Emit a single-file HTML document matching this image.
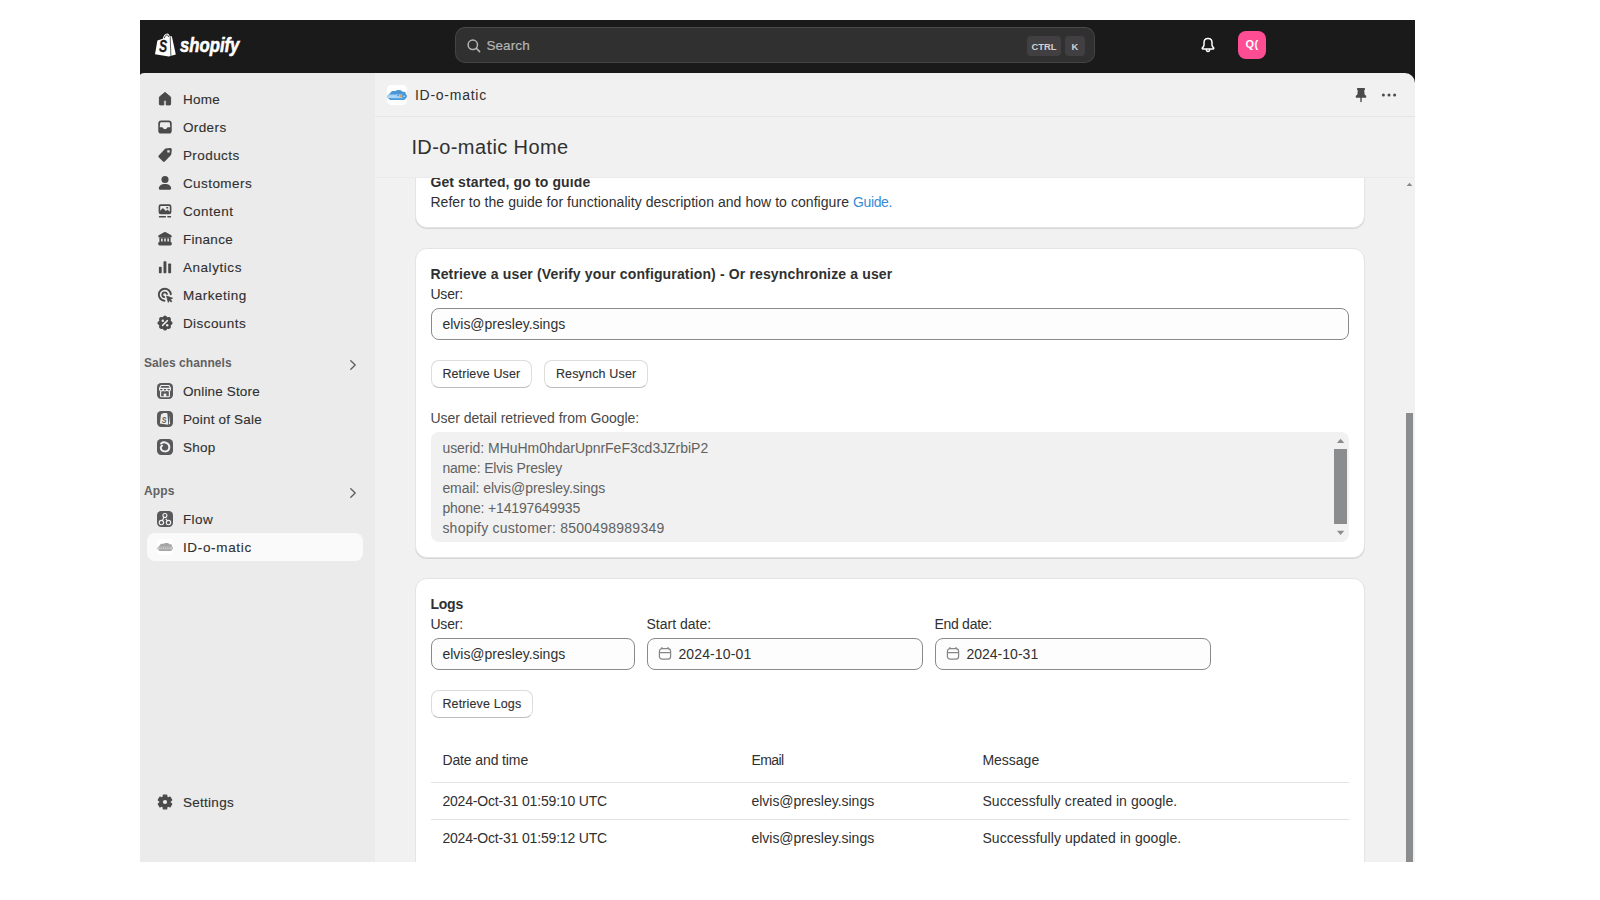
<!DOCTYPE html>
<html lang="en">
<head>
<meta charset="utf-8">
<title>ID-o-matic · Shopify</title>
<style>
*{box-sizing:border-box;margin:0;padding:0}
html,body{width:1600px;height:900px;background:#fff;overflow:hidden}
body{font-family:"Liberation Sans",sans-serif;color:#303030;position:relative}
.abs{position:absolute}
.m,.n,.s{position:absolute;white-space:pre;line-height:20px;height:20px;color:#303030}
.n{-webkit-text-stroke:.12px #303030}
.s{color:#616161;font-weight:700}
.kbd{position:absolute;height:20px;border-radius:4px;background:#413f41;color:#d2d2d2;font-weight:700;font-size:9.4px;line-height:22px;text-align:center;letter-spacing:0}
.card{position:absolute;background:#fff;border-radius:12px;border:1px solid #e4e4e4;box-shadow:0 1px 0 0 #d6d6d6}
.inp{position:absolute;height:32px;border:1px solid #8a8a8a;border-radius:8px;background:#fdfdfd}
.btn{position:absolute;height:28px;border-radius:8px;background:#fff;border:1px solid #dcdcdc;border-bottom-color:#bdbdbd}
.hr{position:absolute;height:1px;background:#e3e3e3}
</style>
</head>
<body>
<div class="abs" style="left:140px;top:20px;width:1275px;height:842px;background:#1a1a1a"></div>
<div class="abs" style="left:140px;top:73px;width:235px;height:789px;background:#ebebeb;border-top-left-radius:4.5px 2.5px"></div>
<div class="abs" style="left:375px;top:73px;width:1040px;height:789px;background:#f1f1f1;border-top-right-radius:10px"></div>
<svg class="abs" style="left:154px;top:32px" width="24" height="26" viewBox="0 0 24 26">
<path d="M3.4 8.4 L8.8 6.8 C9.4 3.9 11 1.4 13.2 1.4 C14.5 1.4 15.3 2.5 15.7 4.4 L17.3 4 L18 4.9 L21.8 22.6 L14.8 24.6 L1 22.2 Z" fill="#fff"/>
<path d="M16.2 4.6 L16.9 24" stroke="#1a1a1a" stroke-width=".7" fill="none"/>
<path d="M10.4 6.2 C10.8 4.4 11.8 2.9 13 2.8 C13.8 2.8 14.3 3.8 14.5 5" stroke="#1a1a1a" stroke-width=".8" fill="none"/>
</svg>
<div class="abs" style="left:154.9px;top:35.6px;width:16px;height:20px;font:italic 700 16.5px/20px 'Liberation Sans',sans-serif;color:#1a1a1a;text-align:center;-webkit-text-stroke:.3px #1a1a1a;transform:scaleX(.74)">S</div>
<div class="abs" style="left:179.6px;top:31.6px;height:26px;font:italic 700 20.5px/26px 'Liberation Sans',sans-serif;color:#fff;letter-spacing:0;white-space:pre;-webkit-text-stroke:.6px #fff;transform:scaleX(.815);transform-origin:0 0">shopify</div>
<div class="abs" style="left:455px;top:27px;width:640px;height:36px;border-radius:10px;background:#303030;border:1px solid #444;border-top-color:#4c4c4c"></div>
<svg class="abs" style="left:466px;top:37.5px" width="16" height="16" viewBox="0 0 16 16" fill="none" stroke="#b5b5b5" stroke-width="1.5" stroke-linecap="round"><circle cx="6.8" cy="6.8" r="4.7"/><path d="M10.4 10.4 L13.6 13.6"/></svg>
<div class="m" style="left:486.40px;top:36.10px;font-size:13.5px;letter-spacing:0.105px;color:#b5b5b5;-webkit-text-stroke:.2px #b5b5b5;">Search</div>
<div class="kbd" style="left:1027px;top:36px;width:34px">CTRL</div><div class="kbd" style="left:1065px;top:36px;width:20px">K</div>
<svg class="abs" style="left:1199px;top:36px" width="18" height="18" viewBox="0 0 18 18" fill="none" stroke="#fff" stroke-width="1.5" stroke-linejoin="round" stroke-linecap="round">
<path d="M9 2.6 C6.5 2.6 5 4.4 5 6.7 V9 C5 10 4.4 10.9 3.4 11.9 C3 12.3 3.2 13 3.9 13 H14.1 C14.8 13 15 12.3 14.6 11.9 C13.6 10.9 13 10 13 9 V6.7 C13 4.4 11.5 2.6 9 2.6 Z"/>
<path d="M7.4 13.4 C7.4 14.6 8.1 15.4 9 15.4 C9.9 15.4 10.6 14.6 10.6 13.4"/>
</svg>
<div class="abs" style="left:1238px;top:31px;width:28px;height:28px;border-radius:8px;background:#ff4d94;color:#fff;font-weight:700;font-size:11px;line-height:27px;text-align:center;letter-spacing:.3px">Q(</div>
<div class="abs" style="left:147px;top:533px;width:216px;height:28px;border-radius:8px;background:#fafafa"></div>
<div class="n" style="left:182.90px;top:90.00px;font-size:13.5px;letter-spacing:0.263px;">Home</div>
<svg class="abs" style="left:155.00px;top:88.60px" width="20" height="20" viewBox="-10 -10 20 20" ><path fill="#4a4a4a" stroke="#4a4a4a" stroke-width="1" stroke-linejoin="round" d="M0 -6.6 L5.6 -2 V5.2 a.7 .7 0 0 1 -.7 .7 H1.2 V2.2 a1.2 1.2 0 0 0 -2.4 0 V5.9 H-4.9 a.7 .7 0 0 1 -.7 -.7 V-2 Z"/></svg>
<div class="n" style="left:182.90px;top:118.00px;font-size:13.5px;letter-spacing:0.408px;">Orders</div>
<svg class="abs" style="left:155.00px;top:116.60px" width="20" height="20" viewBox="-10 -10 20 20" ><path transform="scale(1.05)" fill="#4a4a4a" fill-rule="evenodd" d="M-3.6 -6.3 H3.6 A2.8 2.8 0 0 1 6.4 -3.5 V3.5 A2.8 2.8 0 0 1 3.6 6.3 H-3.6 A2.8 2.8 0 0 1 -6.4 3.5 V-3.5 A2.8 2.8 0 0 1 -3.6 -6.3 Z M-3.7 -4.6 a.9 .9 0 0 0 -.9 .8 L-5 .3 H-2.6 a.7 .7 0 0 1 .6 .4 C-1.6 1.6 -.9 2.1 0 2.1 C.9 2.1 1.6 1.6 2 .7 a.7 .7 0 0 1 .6 -.4 H5 L4.6 -3.8 a.9 .9 0 0 0 -.9 -.8 Z"/></svg>
<div class="n" style="left:182.90px;top:146.00px;font-size:13.5px;letter-spacing:0.432px;">Products</div>
<svg class="abs" style="left:155.00px;top:144.60px" width="20" height="20" viewBox="-10 -10 20 20" ><path fill="#4a4a4a" fill-rule="evenodd" d="M.6 -6.4 L5.2 -6.9 Q6.9 -7 6.8 -5.3 L6.3 -.7 Q6.2 -.1 5.8 .3 L-.2 6.5 Q-1.1 7.3 -2 6.5 L-6.3 2.2 Q-7.1 1.3 -6.3 .4 L-.1 -5.9 Q.2 -6.3 .6 -6.4 Z M2.3 -4.7 h2.3 v2.3 h-2.3 z"/></svg>
<div class="n" style="left:182.90px;top:174.00px;font-size:13.5px;letter-spacing:0.442px;">Customers</div>
<svg class="abs" style="left:155.00px;top:172.60px" width="20" height="20" viewBox="-10 -10 20 20" ><circle cx="0" cy="-3.5" r="3.55" fill="#4a4a4a"/><path fill="#4a4a4a" d="M-6.1 5.3 C-6.1 2.3 -3.2 .9 0 .9 C3.2 .9 6.1 2.3 6.1 5.3 Q6.1 6.8 4.8 6.8 H-4.8 Q-6.1 6.8 -6.1 5.3 Z"/></svg>
<div class="n" style="left:182.90px;top:202.00px;font-size:13.5px;letter-spacing:0.469px;">Content</div>
<svg class="abs" style="left:155.00px;top:200.60px" width="20" height="20" viewBox="-10 -10 20 20" ><path fill="#4a4a4a" fill-rule="evenodd" d="M-4.2 -6.7 H4.2 A2.2 2.2 0 0 1 6.4 -4.5 V1 A2.2 2.2 0 0 1 4.2 3.2 H-4.2 A2.2 2.2 0 0 1 -6.4 1 V-4.5 A2.2 2.2 0 0 1 -4.2 -6.7 Z M-4 -5 a.8 .8 0 0 0 -.8 .8 V-.3 L-2.6 -2.6 a.7 .7 0 0 1 1 0 L.9 -.1 L2 -1.1 a.7 .7 0 0 1 1 0 L4.8 .7 V-4.2 a.8 .8 0 0 0 -.8 -.8 Z M1.3 -4.1 h1.9 v1.7 h-1.9 z"/><path d="M-5.5 5.8 H.4 M2.9 5.8 H5.5" stroke="#4a4a4a" stroke-width="1.4" stroke-linecap="round"/></svg>
<div class="n" style="left:182.90px;top:230.00px;font-size:13.5px;letter-spacing:0.295px;">Finance</div>
<svg class="abs" style="left:155.00px;top:228.60px" width="20" height="20" viewBox="-10 -10 20 20" ><path fill="#4a4a4a" d="M-.9 -6.7 Q0 -7.2 .9 -6.7 L5.9 -4 Q6.7 -3.5 6.7 -2.6 V-1.7 H-6.7 V-2.6 Q-6.7 -3.5 -5.9 -4 Z"/><path fill="#4a4a4a" d="M-5.6 -1.8 H5.6 V3.2 H-5.6 Z"/><path fill="#ebebeb" d="M-3.9 -.5 h1.5 v3 h-1.5 z M-.75 -.5 h1.5 v3 h-1.5 z M2.4 -.5 h1.5 v3 h-1.5 z"/><rect x="-6.8" y="2.9" width="13.6" height="3.6" rx="1.4" fill="#4a4a4a"/></svg>
<div class="n" style="left:182.90px;top:258.00px;font-size:13.5px;letter-spacing:0.560px;">Analytics</div>
<svg class="abs" style="left:155.00px;top:256.60px" width="20" height="20" viewBox="-10 -10 20 20" ><rect x="-6.1" y="-.3" width="2.8" height="6.6" rx=".7" fill="#4a4a4a"/><rect x="-1.5" y="-5.7" width="2.9" height="12" rx=".7" fill="#4a4a4a"/><rect x="3.2" y="-3.4" width="2.9" height="9.7" rx=".7" fill="#4a4a4a"/></svg>
<div class="n" style="left:182.90px;top:286.00px;font-size:13.5px;letter-spacing:0.503px;">Marketing</div>
<svg class="abs" style="left:155.00px;top:284.60px" width="20" height="20" viewBox="-10 -10 20 20" ><path fill="none" stroke="#4a4a4a" stroke-width="1.9" stroke-linecap="round" d="M5.8 -.8 A6 6 0 1 0 -.6 5.7"/><path fill="none" stroke="#4a4a4a" stroke-width="1.8" stroke-linecap="round" d="M2 -.9 A2.4 2.4 0 1 0 -.7 2.1"/><path fill="#4a4a4a" stroke="#4a4a4a" stroke-width=".8" stroke-linejoin="round" d="M1.6 1.1 L7.6 3.2 L5.2 4.4 L6.9 6.3 L6 7.1 L4.3 5.3 L3.3 7.4 Z"/></svg>
<div class="n" style="left:182.90px;top:314.00px;font-size:13.5px;letter-spacing:0.441px;">Discounts</div>
<svg class="abs" style="left:155.00px;top:312.60px" width="20" height="20" viewBox="-10 -10 20 20" ><path fill="#4a4a4a" d="M-2.37 -5.73 Q0.00 -9.50 2.37 -5.73 Q6.72 -6.72 5.73 -2.37 Q9.50 0.00 5.73 2.37 Q6.72 6.72 2.37 5.73 Q0.00 9.50 -2.37 5.73 Q-6.72 6.72 -5.73 2.37 Q-9.50 0.00 -5.73 -2.37 Q-6.72 -6.72 -2.37 -5.73 Z"/><path d="M-2.4 2.4 L2.4 -2.4" stroke="#ebebeb" stroke-width="1.5" stroke-linecap="round"/><circle cx="-2.2" cy="-2.2" r="1.2" fill="#ebebeb"/><circle cx="2.2" cy="2.2" r="1.2" fill="#ebebeb"/></svg>
<div class="n" style="left:182.90px;top:382.00px;font-size:13.5px;letter-spacing:0.160px;">Online Store</div>
<svg class="abs" style="left:155.00px;top:380.60px" width="20" height="20" viewBox="-10 -10 20 20" ><rect x="-8" y="-8" width="16" height="16" rx="4.2" fill="#59595b"/><g fill="none" stroke="#f0f0f0" stroke-width="1.15" stroke-linejoin="round" stroke-linecap="round"><path d="M-4 -5.5 H4 L5.5 -2.7 H-5.5 Z"/><path d="M-5.5 -2.7 v.9 a1.83 1.83 0 0 0 3.66 0 a1.83 1.83 0 0 0 3.66 0 a1.83 1.83 0 0 0 3.66 0 v-.9"/><path d="M-4.4 .6 V5.1 Q-4.4 5.7 -3.8 5.7 H3.8 Q4.4 5.7 4.4 5.1 V.6"/></g><path fill="#f0f0f0" d="M-1.3 2.6 h2.6 v3.3 h-2.6 z"/></svg>
<div class="n" style="left:182.90px;top:410.00px;font-size:13.5px;letter-spacing:0.187px;">Point of Sale</div>
<svg class="abs" style="left:155.00px;top:408.60px" width="20" height="20" viewBox="-10 -10 20 20" ><rect x="-8" y="-8" width="16" height="16" rx="4.2" fill="#59595b"/><path fill="#eeeeee" d="M-4 -4.6 C-3 -5.4 -1.6 -6 -.6 -6 C.6 -6.1 1.8 -5.9 2.4 -5.6 L3.3 5.7 L-5.1 4.5 Z"/><path fill="#eeeeee" d="M4.1 -4 L5.1 5 L4 5.3 Z"/><text transform="translate(-.8 3.5) scale(.8 1)" text-anchor="middle" font-family="Liberation Sans, sans-serif" font-style="italic" font-weight="700" font-size="8.8" fill="#59595b" opacity=".99">S</text></svg>
<div class="n" style="left:182.90px;top:438.00px;font-size:13.5px;letter-spacing:0.257px;">Shop</div>
<svg class="abs" style="left:155.00px;top:436.60px" width="20" height="20" viewBox="-10 -10 20 20" ><rect x="-8" y="-8" width="16" height="16" rx="4.2" fill="#59595b"/><path fill="none" stroke="#f0f0f0" stroke-width="1.95" stroke-linecap="round" d="M-3.9 -3.5 C-2.6 -4.7 -.4 -4.9 1.4 -4.2 C3.4 -3.3 4.5 -1.4 4.3 .6 C4 3 2 4.5 -.2 4.4 C-2.6 4.3 -4.3 2.6 -4.2 .7 C-4.1 -.3 -3.6 -1 -2.8 -1.3"/></svg>
<div class="n" style="left:182.90px;top:510.00px;font-size:13.5px;letter-spacing:0.432px;">Flow</div>
<svg class="abs" style="left:155.00px;top:508.60px" width="20" height="20" viewBox="-10 -10 20 20" ><rect x="-8" y="-8" width="16" height="16" rx="4.2" fill="#59595b"/><g fill="none" stroke="#f4f4f4" stroke-width="1.1" stroke-linecap="round"><circle cx="-.1" cy="-3.5" r="2"/><circle cx="-3.6" cy="3.6" r="2.2"/><circle cx="3.5" cy="3.6" r="2.2"/><path d="M-1 -1.7 L-2.6 1.6 M1 .2 L2.3 1.7"/></g></svg>
<div class="n" style="left:182.90px;top:538.00px;font-size:13.5px;letter-spacing:0.672px;">ID-o-matic</div>
<div class="n" style="left:182.90px;top:793.00px;font-size:13.5px;letter-spacing:0.289px;">Settings</div>
<svg class="abs" style="left:155.00px;top:791.60px" width="20" height="20" viewBox="-10 -10 20 20" ><path fill="#4a4a4a" stroke="#4a4a4a" stroke-width="1.2" stroke-linejoin="round" fill-rule="evenodd" d="M-2.04 -4.57 L-1.66 -6.80 L1.66 -6.80 L2.04 -4.57 L2.93 -4.05 L5.06 -4.84 L6.72 -1.96 L4.97 -0.52 L4.97 0.52 L6.72 1.96 L5.06 4.84 L2.93 4.05 L2.04 4.57 L1.66 6.80 L-1.66 6.80 L-2.04 4.57 L-2.93 4.05 L-5.06 4.84 L-6.72 1.96 L-4.97 0.52 L-4.97 -0.52 L-6.72 -1.96 L-5.06 -4.84 L-2.93 -4.05 Z"/><circle r="5.2" fill="#4a4a4a"/><circle r="2.1" fill="#ebebeb"/></svg>
<div class="s" style="left:143.90px;top:353.00px;font-size:12px;letter-spacing:0.083px;font-weight:700;">Sales channels</div>
<div class="s" style="left:143.90px;top:481.00px;font-size:12px;letter-spacing:0.200px;font-weight:700;">Apps</div>
<svg class="abs" style="left:346px;top:357.5px" width="14" height="14" viewBox="0 0 14 14" fill="none" stroke="#616161" stroke-width="1.4" stroke-linecap="round" stroke-linejoin="round"><path d="M4.8 2.8 L9.2 7 L4.8 11.2"/></svg>
<svg class="abs" style="left:346px;top:485.5px" width="14" height="14" viewBox="0 0 14 14" fill="none" stroke="#616161" stroke-width="1.4" stroke-linecap="round" stroke-linejoin="round"><path d="M4.8 2.8 L9.2 7 L4.8 11.2"/></svg>
<div class="abs" style="left:157px;top:539px;width:16px;height:16px;border-radius:4px;background:#fff"></div>
<svg class="abs" style="left:157px;top:539px" width="16" height="16" viewBox="0 0 20 20"><path fill="#a6a6a6" d="M3.2 15 L1.2 13.2 Q-.1 11.7 .6 10.5 L3 8.3 L4.4 6.5 Q4.8 6 5.4 6 H8.4 L9.2 5.4 Q9.8 4.9 10.6 4.9 H12.8 Q13.6 4.9 14.2 5.4 L15.6 6.7 H17.4 Q18.5 6.8 18.6 7.8 V8.8 L19.6 10 Q20.3 11.2 19.6 12.5 L17.9 14.6 Q17.5 15 16.8 15 Z"/><path fill="#cfcfcf" d="M1.6 9.6 H18.6 L19.4 11.2 L18.8 12.8 H1 Q.2 11.4 1.6 9.6 Z"/><path d="M3 11.2 H17.6" stroke="#9a9a9a" stroke-width="1.6" stroke-dasharray="1.7 1.1"/></svg>
<div class="abs" style="left:375px;top:116px;width:1040px;height:1px;background:#e6e6e6"></div>
<div class="abs" style="left:387px;top:85px;width:20px;height:20px;border-radius:4.5px;background:#fff"></div>
<svg class="abs" style="left:387px;top:85px" width="20" height="20" viewBox="0 0 20 20"><path fill="#4b97d6" d="M3.2 15 L1.2 13.2 Q-.1 11.7 .6 10.5 L3 8.3 L4.4 6.5 Q4.8 6 5.4 6 H8.4 L9.2 5.4 Q9.8 4.9 10.6 4.9 H12.8 Q13.6 4.9 14.2 5.4 L15.6 6.7 H17.4 Q18.5 6.8 18.6 7.8 V8.8 L19.6 10 Q20.3 11.2 19.6 12.5 L17.9 14.6 Q17.5 15 16.8 15 Z"/><path fill="#a5d2f4" d="M1.6 9.5 H15.4 V12.9 H1 Q.2 11.4 1.6 9.5 Z"/><path fill="#5aa6e2" d="M3 13 H17.6 L16.6 14.2 H4.2 Z"/><rect x="12.9" y="10.2" width="1.8" height="1.9" fill="#ee9631"/><rect x="10.6" y="10" width="1.3" height="1.1" fill="#2f7fca"/><rect x="15.4" y="9.8" width="3.6" height="2.6" fill="#3f8fd2"/><path d="M2.2 11.4 h1 M6.2 11.4 h1 M16 11.2 h2.4" stroke="#dcecf8" stroke-width=".9"/></svg>
<div class="m" style="left:414.90px;top:85.00px;font-size:14px;letter-spacing:0.749px;color:#303030;">ID-o-matic</div>
<svg class="abs" style="left:1351px;top:85px" width="20" height="20" viewBox="0 0 20 20" fill="#4a4a4a"><path d="M6.8 3 H13.2 Q14 3 14 3.8 V4.4 Q14 5.2 13.2 5.2 L13.6 9.4 L14.8 10.4 Q15.2 10.7 15.2 11.2 V12.2 Q15.2 12.8 14.6 12.8 H10.7 V16.6 Q10.7 17.3 10 17.3 Q9.3 17.3 9.3 16.6 V12.8 H5.4 Q4.8 12.8 4.8 12.2 V11.2 Q4.8 10.7 5.2 10.4 L6.4 9.4 L6.8 5.2 Q6 5.2 6 4.4 V3.8 Q6 3 6.8 3 Z"/></svg>
<svg class="abs" style="left:1379px;top:85px" width="20" height="20" viewBox="0 0 20 20" fill="#4a4a4a"><circle cx="4.4" cy="10" r="1.5"/><circle cx="10" cy="10" r="1.5"/><circle cx="15.6" cy="10" r="1.5"/></svg>
<div class="m" style="left:411.40px;top:133.00px;font-size:20px;letter-spacing:0.404px;line-height:28px;height:28px;color:#303030;">ID-o-matic Home</div>
<div class="abs" style="left:375px;top:177px;width:1040px;height:1px;background:#eaeaea"></div>
<div class="abs" style="left:375px;top:178px;width:1040px;height:684px;overflow:hidden"><div class="abs" style="left:-375px;top:-178px;width:1600px;height:900px">
<div class="card" style="left:415px;top:150px;width:950px;height:78px"></div>
<div class="m" style="left:430.40px;top:172.00px;font-size:14px;letter-spacing:0.117px;font-weight:700;">Get started, go to guide</div>
<div class="m" style="left:430.40px;top:192.00px;font-size:14px;letter-spacing:0.055px;">Refer to the guide for functionality description and how to configure</div>
<div class="m" style="left:852.90px;top:192.00px;font-size:14px;letter-spacing:-0.340px;color:#3a8bd6;">Guide.</div>
<div class="card" style="left:415px;top:248px;width:950px;height:310px"></div>
<div class="m" style="left:430.40px;top:264.00px;font-size:14px;letter-spacing:0.144px;font-weight:700;">Retrieve a user (Verify your configuration) - Or resynchronize a user</div>
<div class="m" style="left:430.40px;top:284.00px;font-size:14px;letter-spacing:-0.162px;">User:</div>
<div class="inp" style="left:431px;top:308px;width:918px"></div>
<div class="m" style="left:442.40px;top:314.00px;font-size:14px;letter-spacing:-0.005px;">elvis@presley.sings</div>
<div class="btn" style="left:431px;top:360px;width:101px"></div>
<div class="n" style="left:442.40px;top:364.00px;font-size:12.5px;letter-spacing:0.116px;">Retrieve User</div>
<div class="btn" style="left:544px;top:360px;width:104px"></div>
<div class="n" style="left:555.90px;top:364.00px;font-size:12.5px;letter-spacing:0.164px;">Resynch User</div>
<div class="m" style="left:430.40px;top:408.30px;font-size:14px;letter-spacing:-0.039px;color:#4a4a4a;">User detail retrieved from Google:</div>
<div class="abs" style="left:431px;top:432px;width:918px;height:110px;border-radius:8px;background:#f1f1f1"></div>
<div class="m" style="left:442.40px;top:438.00px;font-size:14px;letter-spacing:-0.031px;color:#616161;">userid: MHuHm0hdarUpnrFeF3cd3JZrbiP2</div>
<div class="m" style="left:442.40px;top:458.00px;font-size:14px;letter-spacing:-0.174px;color:#616161;">name: Elvis Presley</div>
<div class="m" style="left:442.40px;top:478.00px;font-size:14px;letter-spacing:-0.053px;color:#616161;">email: elvis@presley.sings</div>
<div class="m" style="left:442.40px;top:498.00px;font-size:14px;letter-spacing:-0.152px;color:#616161;">phone: +14197649935</div>
<div class="m" style="left:442.40px;top:518.00px;font-size:14px;letter-spacing:0.233px;color:#616161;">shopify customer: 8500498989349</div>
<div class="abs" style="left:1334px;top:449px;width:13px;height:75px;background:#8b8c8e"></div>
<svg class="abs" style="left:1335px;top:436px" width="12" height="10" viewBox="0 0 12 10"><path d="M1.9 6.9 L5.6 2.8 L9.3 6.9 Z" fill="#8b8c8e"/></svg>
<svg class="abs" style="left:1335px;top:528px" width="12" height="10" viewBox="0 0 12 10"><path d="M1.9 2.8 L5.6 7 L9.3 2.8 Z" fill="#8b8c8e"/></svg>
<div class="card" style="left:415px;top:578px;width:950px;height:320px"></div>
<div class="m" style="left:430.40px;top:594.00px;font-size:14px;letter-spacing:-0.214px;font-weight:700;">Logs</div>
<div class="m" style="left:430.40px;top:614.00px;font-size:14px;letter-spacing:-0.162px;">User:</div>
<div class="m" style="left:646.40px;top:614.00px;font-size:14px;letter-spacing:0.021px;">Start date:</div>
<div class="m" style="left:934.40px;top:614.00px;font-size:14px;letter-spacing:-0.267px;">End date:</div>
<div class="inp" style="left:431px;top:638px;width:204px"></div>
<div class="inp" style="left:647px;top:638px;width:276px"></div>
<div class="inp" style="left:935px;top:638px;width:276px"></div>
<div class="m" style="left:442.40px;top:644.00px;font-size:14px;letter-spacing:-0.005px;">elvis@presley.sings</div>
<div class="m" style="left:678.40px;top:644.00px;font-size:14px;letter-spacing:0.131px;">2024-10-01</div>
<div class="m" style="left:966.40px;top:644.00px;font-size:14px;letter-spacing:0.020px;">2024-10-31</div>
<svg class="abs" style="left:658px;top:647px" width="14" height="14" viewBox="0 0 14 14" fill="none" stroke="#878787" stroke-width="1.25" stroke-linecap="round"><rect x="1.4" y="1.7" width="11.2" height="10.5" rx="2.7"/><path d="M1.6 5.7 H12.4 M3.9 .6 V1.6 M10.1 .6 V1.6"/></svg>
<svg class="abs" style="left:946px;top:647px" width="14" height="14" viewBox="0 0 14 14" fill="none" stroke="#878787" stroke-width="1.25" stroke-linecap="round"><rect x="1.4" y="1.7" width="11.2" height="10.5" rx="2.7"/><path d="M1.6 5.7 H12.4 M3.9 .6 V1.6 M10.1 .6 V1.6"/></svg>
<div class="btn" style="left:431px;top:690px;width:102px"></div>
<div class="n" style="left:442.40px;top:694.00px;font-size:12.5px;letter-spacing:0.140px;">Retrieve Logs</div>
<div class="m" style="left:442.40px;top:750.00px;font-size:14px;letter-spacing:-0.113px;">Date and time</div>
<div class="m" style="left:751.40px;top:750.00px;font-size:14px;letter-spacing:-0.552px;">Email</div>
<div class="m" style="left:982.40px;top:750.00px;font-size:14px;letter-spacing:-0.001px;">Message</div>
<div class="hr" style="left:431px;top:782px;width:918px"></div>
<div class="m" style="left:442.40px;top:791.00px;font-size:14px;letter-spacing:-0.177px;">2024-Oct-31 01:59:10 UTC</div>
<div class="m" style="left:751.40px;top:791.00px;font-size:14px;letter-spacing:-0.005px;">elvis@presley.sings</div>
<div class="m" style="left:982.40px;top:791.00px;font-size:14px;letter-spacing:0.060px;">Successfully created in google.</div>
<div class="hr" style="left:431px;top:819px;width:918px"></div>
<div class="m" style="left:442.40px;top:828.00px;font-size:14px;letter-spacing:-0.177px;">2024-Oct-31 01:59:12 UTC</div>
<div class="m" style="left:751.40px;top:828.00px;font-size:14px;letter-spacing:-0.005px;">elvis@presley.sings</div>
<div class="m" style="left:982.40px;top:828.00px;font-size:14px;letter-spacing:0.063px;">Successfully updated in google.</div>
<div class="abs" style="left:1406px;top:412.5px;width:7px;height:460px;background:#8b8c8e"></div>
<svg class="abs" style="left:1405px;top:181px" width="9" height="7" viewBox="0 0 9 7"><path d="M1.6 5 L4.5 1.8 L7.4 5 Z" fill="#8a8a8a"/></svg>
</div></div>
</body>
</html>
